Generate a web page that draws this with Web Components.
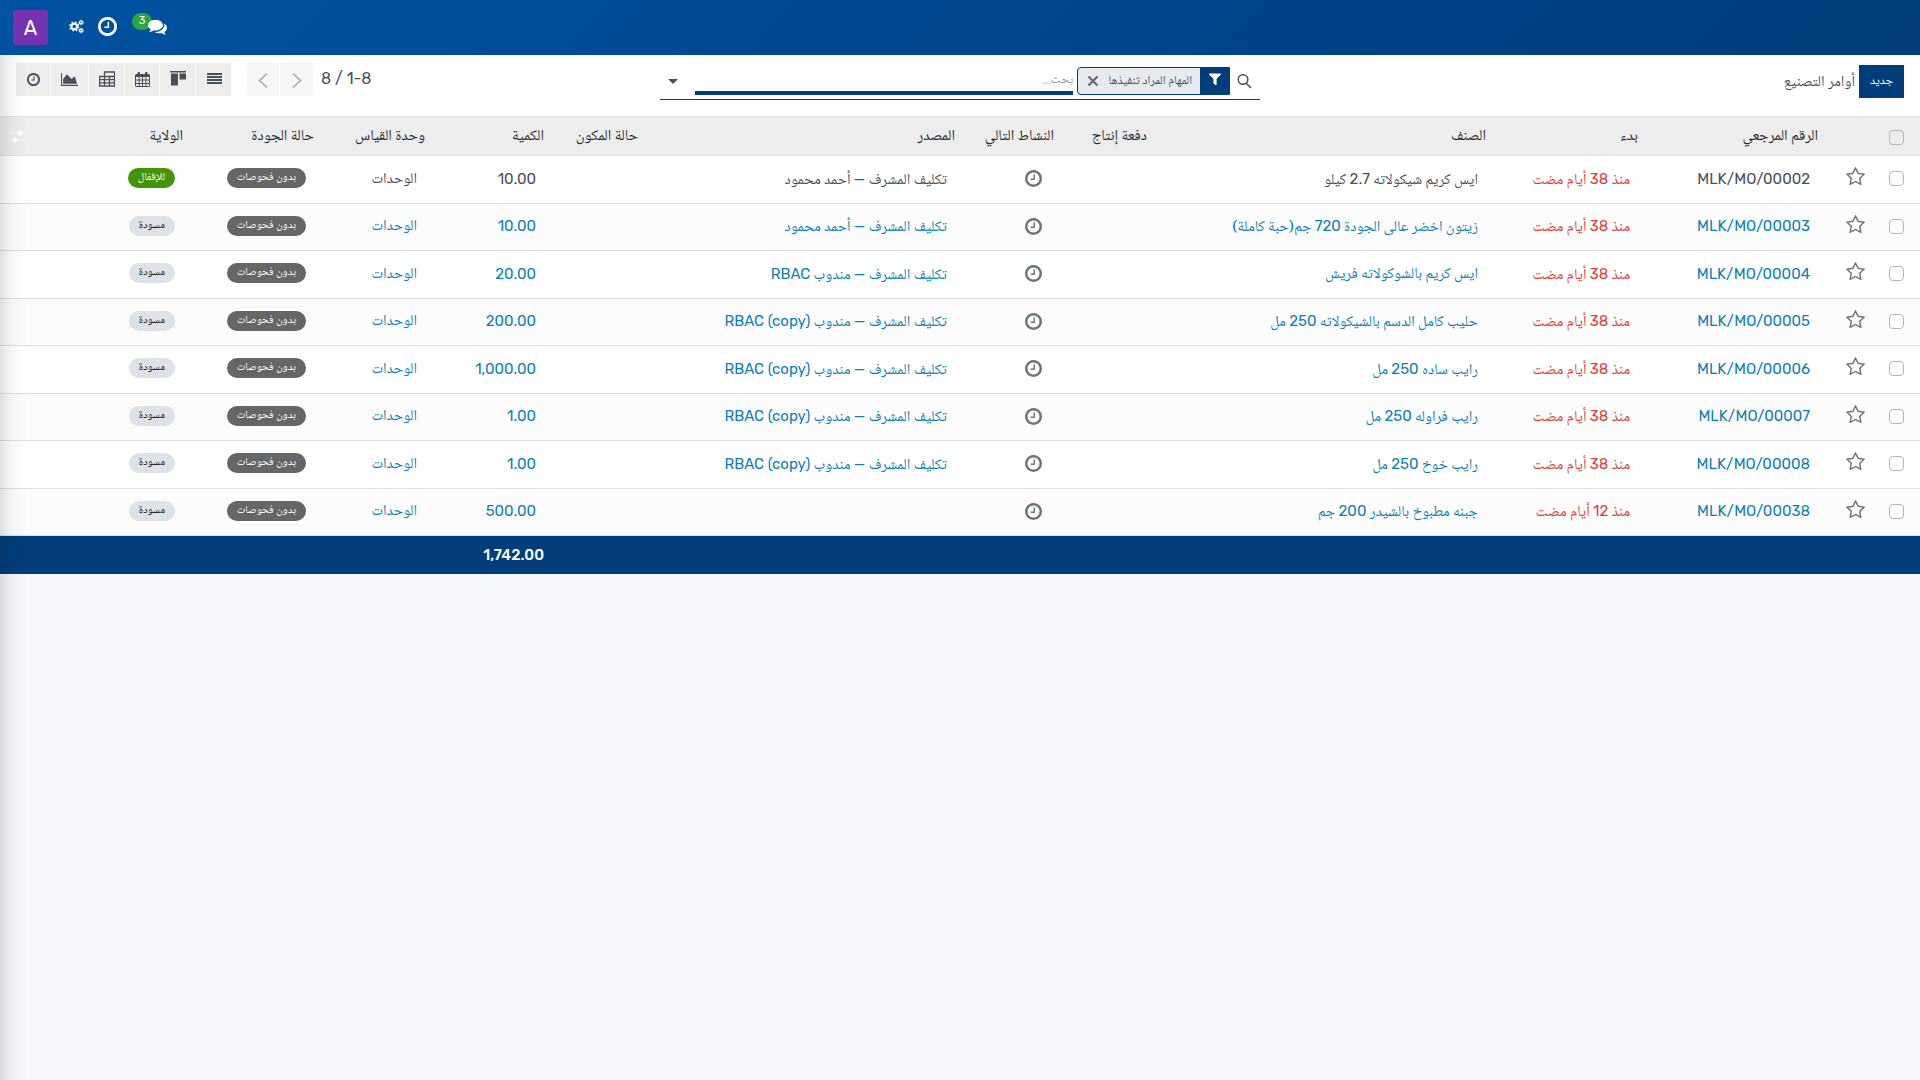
<!DOCTYPE html>
<html lang="ar" dir="rtl">

<head>
  <meta charset="UTF-8">
  <meta name="viewport" content="width=device-width, initial-scale=1.0">
  <title>أوامر التصنيع</title>
  <style>
    body {
      --primary: #003d7a;
      --border: #dee2e6;
      --text: #4a4f59;
      --info: #0c82ad;
      --danger: #d9403c;
      --latin: Rubik, Roboto, sans-serif;
      margin: 0;
      min-height: 100vh;
      display: flex;
      flex-direction: column;
      background: #f5f7fb;
      color: var(--text);
      font: 15px/22px "Noto Naskh Arabic", Rubik, Roboto, sans-serif;
    }
  </style>
</head>

<body>

  <main-navbar user="A" messages="3"></main-navbar>

  <action-view>
    <control-panel slot="panel" heading="أوامر التصنيع" pager="1-8 / 8">
      <search-facet>المهام المراد تنفيذها</search-facet>
    </control-panel>
    <order-list></order-list>
  </action-view>

  <template id="main-navbar">
    <style>
      :host {
        display: flex;
        justify-content: flex-end;
        align-items: center;
        height: 55px;
        padding: 0 13px;
        background: linear-gradient(135deg, #0052a2, #003d7a);
        color: #fff;
        font-family: var(--latin);
      }

      button {
        display: flex;
        padding: 0;
        border: 0;
        background: none;
        color: inherit;
        font: inherit;
        cursor: pointer;
      }

      .tools {
        display: flex;
        align-items: center;
        gap: 14px;
        margin-left: 21px;
        padding-bottom: 2px;
      }

      .messages {
        position: relative;
        margin-left: 17px;
      }

      .count {
        position: absolute;
        top: -4px;
        right: 15px;
        width: 20px;
        height: 17px;
        border-radius: 9px;
        background: #28a745;
        font-size: 11px;
        line-height: 15px;
        text-align: center;
      }

      .messages svg-icon {
        position: relative;
      }

      .avatar {
        width: 35px;
        height: 35px;
        justify-content: center;
        align-items: center;
        border-radius: 3px;
        background: #7432b0;
        font-size: 20px;
      }
    </style>
    <div class="tools">
      <button class="messages" aria-label="المحادثات">
        <span class="count"></span>
        <svg-icon name="comments" size="19"></svg-icon>
      </button>
      <button aria-label="الأنشطة"><svg-icon name="clock" size="19"></svg-icon></button>
      <button aria-label="الإعدادات"><svg-icon name="cogs" size="15"></svg-icon></button>
    </div>
    <button class="avatar"></button>
  </template>

  <template id="action-view">
    <style>
      :host {
        display: block;
        flex: 1;
        position: relative;
      }

      .edge {
        position: absolute;
        top: 0;
        bottom: 0;
        left: 0;
        width: 28px;
        background: linear-gradient(to right, rgba(0, 0, 0, .11), rgba(0, 0, 0, .03) 45%, transparent);
        pointer-events: none;
      }
    </style>
    <slot name="panel"></slot>
    <slot></slot>
    <div class="edge"></div>
  </template>

  <template id="control-panel">
    <style>
      :host {
        display: grid;
        grid-template-columns: 1fr 600px 1fr;
        height: 61px;
        padding: 0 16px;
        box-sizing: border-box;
        background: #fff;
      }

      button {
        display: flex;
        justify-content: center;
        align-items: center;
        padding: 0;
        border: 0;
        color: inherit;
        font: inherit;
        cursor: pointer;
      }

      .start {
        display: flex;
        align-items: flex-start;
        gap: 4px;
        padding-top: 10px;
      }

      .create {
        width: 45px;
        height: 33px;
        background: var(--primary);
        color: #fff;
        font-size: 12px;
      }

      h1 {
        margin: 0;
        font-size: 15px;
        font-weight: 400;
        line-height: 36px;
      }

      .search {
        display: flex;
        align-items: flex-start;
        align-self: start;
        height: 32px;
        margin-top: 12px;
        border-bottom: 1px solid var(--primary);
      }

      .lens {
        display: flex;
        width: 30px;
        height: 27px;
        padding-right: 2px;
        box-sizing: border-box;
        justify-content: center;
        align-items: center;
      }

      input {
        flex: 1;
        min-width: 0;
        height: 28px;
        margin-right: 4px;
        padding: 1px 0 0;
        box-sizing: border-box;
        border: 0;
        border-bottom: 4px solid var(--primary);
        outline: 0;
        background: none;
        color: inherit;
        font: inherit;
        font-size: 13px;
      }

      input::placeholder {
        color: #9a9da2;
      }

      .toggle {
        width: 35px;
        height: 27px;
        padding-left: 8px;
        justify-content: flex-end;
        background: none;
      }

      .end {
        display: flex;
        justify-content: flex-end;
        align-items: flex-start;
        padding-top: 8px;
      }

      .pager {
        display: flex;
        margin-left: 16px;
      }

      .pager span {
        margin-left: 8px;
        font: 16px/32px var(--latin);
      }

      .pager button {
        width: 33px;
        height: 33px;
        background: #f6f6f6;
        color: #a3a5aa;
      }

      .pager button:first-of-type {
        border-radius: 0 4px 4px 0;
        margin-left: 1px;
      }

      .pager button:last-of-type {
        border-radius: 4px 0 0 4px;
        width: 32px;
      }

      .views {
        display: flex;
        gap: 1px;
      }

      .views button {
        width: 35px;
        height: 33px;
        padding-bottom: 1px;
        background: #ededed;
      }

      .views button.wide {
        width: 37px;
      }

      .views button.narrow {
        width: 34px;
      }
    </style>
    <div class="start">
      <button class="create">جديد</button>
      <h1></h1>
    </div>
    <div class="search" role="search">
      <span class="lens"><svg-icon name="search" size="16"></svg-icon></span>
      <slot></slot>
      <input type="text" placeholder="بحث..." aria-label="بحث">
      <button class="toggle" aria-label="خيارات البحث"><svg-icon name="caret" size="10"></svg-icon></button>
    </div>
    <div class="end">
      <div class="pager">
        <span></span>
        <button aria-label="السابق"><svg-icon name="right" size="16"></svg-icon></button>
        <button aria-label="التالي"><svg-icon name="left" size="16"></svg-icon></button>
      </div>
      <div class="views">
        <button aria-label="قائمة"><svg-icon name="list" size="16"></svg-icon></button>
        <button aria-label="كانبان"><svg-icon name="kanban" size="16"></svg-icon></button>
        <button class="narrow" aria-label="تقويم"><svg-icon name="calendar" size="15"></svg-icon></button>
        <button aria-label="جدول محوري"><svg-icon name="pivot" size="16"></svg-icon></button>
        <button class="wide" aria-label="رسم بياني"><svg-icon name="chart" size="17"></svg-icon></button>
        <button class="narrow" aria-label="نشاط"><svg-icon name="clock" size="13"></svg-icon></button>
      </div>
    </div>
  </template>

  <template id="search-facet">
    <style>
      :host {
        display: flex;
        height: 28px;
        box-sizing: border-box;
        border: 1px solid var(--primary);
        border-radius: 4px 0 0 4px;
        overflow: hidden;
        background: #e7eaee;
        font-size: 12px;
        line-height: 28px;
      }

      .kind {
        display: flex;
        width: 29px;
        justify-content: center;
        align-items: center;
        padding-bottom: 5px;
        background: var(--primary);
        color: #fff;
      }

      .label {
        padding-right: 8px;
      }

      button {
        display: flex;
        width: 30px;
        justify-content: center;
        align-items: center;
        padding: 0;
        border: 0;
        background: none;
        color: #686b78;
        cursor: pointer;
      }
    </style>
    <span class="kind"><svg-icon name="filter" size="12"></svg-icon></span>
    <span class="label"><slot></slot></span>
    <button aria-label="إزالة"><svg-icon name="close" size="12"></svg-icon></button>
  </template>

  <template id="state-badge">
    <style>
      :host {
        display: inline-block;
        padding: 0 10px;
        border-radius: 10px;
        background: #dee2e6;
        color: #15181c;
        font-size: 11px;
        line-height: 20px;
      }

      :host([kind="muted"]) {
        background: #666;
        color: #fff;
      }

      :host([kind="success"]) {
        background: #44940a;
        color: #fff;
      }
    </style>
    <slot></slot>
  </template>

  <template id="order-list">
    <style>
      :host {
        display: block;
      }

      table {
        width: 100%;
        table-layout: fixed;
        border-collapse: collapse;
        background: #fff;
      }

      th,
      td {
        padding: 0 14px 0 0;
        text-align: right;
        white-space: nowrap;
        font-weight: 400;
      }

      thead th {
        height: 36px;
        padding: 2px 6px 0 0;
        border: solid var(--border);
        border-width: 1px 0;
        background: #ededed;
        color: #24282d;
      }

      tbody tr {
        height: 48px;
      }

      tbody tr:nth-child(even) {
        height: 47px;
        background: #fcfcfc;
      }

      tbody td {
        border-bottom: 1px solid var(--border);
      }

      tbody tr.draft {
        color: var(--info);
      }

      tbody .late {
        color: var(--danger);
      }

      .latin {
        font-family: var(--latin);
      }

      td.latin,
      td.pick,
      td.star,
      td.activity {
        padding-bottom: 2px;
      }

      thead .pick,
      tbody .pick {
        padding-right: 16px;
      }

      thead .options {
        padding: 0 12px 0 0;
        color: #fff;
      }

      .star {
        padding-right: 13px;
      }

      .activity {
        padding-right: 18px;
      }

      .activity,
      .star {
        color: #6c757d;
      }

      .badge {
        padding-bottom: 4px;
        line-height: 20px;
      }

      tfoot td {
        height: 38px;
        padding-right: 6px;
        background: var(--primary);
        color: #fff;
        font-family: var(--latin);
        font-weight: 500;
      }

      input {
        appearance: none;
        display: block;
        width: 15px;
        height: 15px;
        margin: 0;
        border: 1px solid #b3b5b8;
        border-radius: 4px;
        box-sizing: border-box;
        background: #fff;
      }

      thead input {
        background: none;
      }

      button {
        display: flex;
        padding: 0;
        border: 0;
        background: none;
        color: inherit;
        cursor: pointer;
      }

      .star button {
        padding-bottom: 4px;
      }
    </style>
    <table>
      <colgroup>
        <col style="width: 42px">
        <col style="width: 54px">
        <col style="width: 180px">
        <col style="width: 152px">
        <col>
        <col style="width: 93px">
        <col style="width: 99px">
        <col style="width: 317px">
        <col style="width: 94px">
        <col style="width: 119px">
        <col style="width: 111px">
        <col style="width: 131px">
        <col style="width: 152px">
        <col style="width: 37px">
      </colgroup>
      <thead>
        <tr>
          <th class="pick"><input type="checkbox" aria-label="تحديد الكل"></th>
          <th></th>
          <th>الرقم المرجعي</th>
          <th>بدء</th>
          <th>الصنف</th>
          <th>دفعة إنتاج</th>
          <th>النشاط التالي</th>
          <th>المصدر</th>
          <th>حالة المكون</th>
          <th>الكمية</th>
          <th>وحدة القياس</th>
          <th>حالة الجودة</th>
          <th>الولاية</th>
          <th class="options"><button aria-label="الأعمدة"><svg-icon name="sliders" size="15"></svg-icon></button></th>
        </tr>
      </thead>
      <tbody></tbody>
      <tfoot>
        <tr>
          <td colspan="9"></td>
          <td class="total"></td>
          <td colspan="4"></td>
        </tr>
      </tfoot>
    </table>
  </template>

  <script>
    // name: [viewBox, markup]
    const ICONS = {
      clock: ["128 128 1536 1536", '<path d="M1024 544v448q0 14-9 23t-23 9h-320q-14 0-23-9t-9-23v-64q0-14 9-23t23-9h224v-352q0-14 9-23t23-9h64q14 0 23 9t9 23zm416 352q0-148-73-273t-198-198-273-73-273 73-198 198-73 273 73 273 198 198 273 73 273-73 198-198 73-273zm224 0q0 209-103 385.500t-279.500 279.500-385.500 103-385.500-103-279.500-279.500-103-385.500 103-385.500 279.500-279.500 385.500-103 385.500 103 279.500 279.500 103 385.500z"/>'],
      comments: ["0 128 1792 1536", '<path d="M1408 768q0 139-94 257t-256.500 186.500-353.500 68.500q-86 0-176-16-124 88-278 128-36 9-86 16h-3q-11 0-20.500-8t-11.500-21q-1-3-1-6.500t.5-6.500 2-6l2.500-5 3.500-5.500 4-5 4.500-5 4-4.500q5-6 23-25t26-29.500 22.500-29 25-38.500 20.500-44q-124-72-195-177t-71-224q0-139 94-257t256.500-186.500 353.500-68.500 353.500 68.500 256.500 186.500 94 257zm384 256q0 120-71 224.500t-195 176.500q10 24 20.500 44t25 38.500 22.500 29 26 29.500 23 25q1 1 4 4.500t4.500 5 4 5 3.500 5.500l2.500 5 2 6 .5 6.500-1 6.500q-3 14-13 22t-22 7q-50-7-86-16-154-40-278-128-90 16-176 16-271 0-472-132 58 4 88 4 161 0 309-45t264-129q125-92 192-212t67-254q0-77-23-152 129 71 204 178t75 230z"/>'],
      cogs: ["0 0 30 30", '<g fill="none" stroke="currentColor"><circle cx="10.500" cy="15" r="5.500" stroke-width="4"/><circle cx="10.500" cy="15" r="8.700" stroke-width="3" stroke-dasharray="3.600 3.233"/><circle cx="24" cy="7" r="2.800" stroke-width="2.400"/><circle cx="24" cy="7" r="4.700" stroke-width="1.800" stroke-dasharray="2 1.691"/><circle cx="24" cy="23" r="2.800" stroke-width="2.400"/><circle cx="24" cy="23" r="4.700" stroke-width="1.800" stroke-dasharray="2 1.691"/></g>'],
      search: ["0 0 16 16", '<g fill="none" stroke="currentColor" stroke-width="1.500"><circle cx="7" cy="6.500" r="4.800"/><path d="M10.300 10.200L15 15"/></g>'],
      caret: ["0 0 10 10", '<path d="M0 3h10L5 8z"/>'],
      filter: ["192 192 1408 1408", '<path d="M1595 295q17 41-14 70l-493 493v742q0 42-39 59-13 5-25 5-27 0-45-19l-256-256q-19-19-19-45v-486l-493-493q-31-29-14-70 17-39 59-39h1280q42 0 59 39z"/>'],
      close: ["0 0 12 12", '<path d="M1.500 1.500l9 9M10.500 1.500l-9 9" fill="none" stroke="currentColor" stroke-width="2.200"/>'],
      left: ["0 0 16 16", '<path d="M12 1.500L4.500 8.500 12 15.500" fill="none" stroke="currentColor" stroke-width="1.400"/>'],
      right: ["0 0 16 16", '<path d="M4 1.500L11.500 8.500 4 15.500" fill="none" stroke="currentColor" stroke-width="1.400"/>'],
      list: ["0 0 16 16", '<path d="M1 2h15v2H1zM1 5h15v2H1zM1 8h15v2H1zM1 11h15v2H1z"/>'],
      kanban: ["0 0 16 16", '<path d="M0 0h16v1.500H0zM1 2.500h7v12H1zM9.500 2.500H16v6H9.500z"/>'],
      calendar: ["0 0 15 15", '<path d="M1.500 2h12A1.500 1.500 0 0115 3.500v10a1.500 1.500 0 01-1.500 1.500h-12A1.500 1.500 0 010 13.500v-10A1.500 1.500 0 011.500 2zM1 5v2.500h2.600V5zm3.600 0v2.500h2.400V5zM8 5v2.500h2.400V5zm3.400 0v2.500H14V5zM1 8.500V11h2.600V8.500zm3.600 0V11H7V8.500zM8 8.500V11h2.400V8.500zm3.400 0V11H14V8.500zM1 12v2h2.600v-2zm3.600 0v2H7v-2zM8 12v2h2.400v-2zm3.400 0v2H14v-2z" fill-rule="evenodd"/><rect x="2.500" y="0" width="2.500" height="4" rx="1"/><rect x="10" y="0" width="2.500" height="4" rx="1"/>'],
      pivot: ["0 0 16 16", '<path d="M5.500 5V1h10v14H.5V5.500h15M.5 8.600h15M.5 11.800h15M5.500 5v10M10.500 5v10" fill="none" stroke="currentColor" stroke-width="1.300"/>'],
      chart: ["0 0 2048 1792", '<path d="M2048 1536v128h-2048v-1536h128v1408h1920zm-384-1024l256 896h-1664v-576l448-576 576 576z"/>'],
      star: ["64 64 1664 1600", '<path d="M1201 1004l306-297-422-62-189-382-189 382-422 62 306 297-73 421 378-199 377 199zm527-357q0 22-26 48l-363 354 86 500q1 7 1 20 0 50-41 50-19 0-40-12l-449-236-449 236q-22 12-40 12-21 0-31.500-14.500t-10.500-35.500q0-6 2-20l86-500-364-354q-25-27-25-48 0-37 56-46l502-73 225-455q19-41 49-41t49 41l225 455 502 73q56 9 56 46z"/>'],
      sliders: ["0 0 15 15", '<path d="M0 3.500h15v1H0zM0 10.500h15v1H0z"/><circle cx="10" cy="4" r="2.500"/><circle cx="5" cy="11" r="2.500"/>']
    };

    const SUPERVISOR = "تكليف المشرف — ";

    const ORDERS = [
      { ref: "MLK/MO/00002", days: 38, product: "ايس كريم شيكولاته 2.7 كيلو", source: SUPERVISOR + "أحمد محمود", qty: 10, closing: true },
      { ref: "MLK/MO/00003", days: 38, product: "زيتون اخضر عالى الجودة 720 جم(حبة كاملة)", source: SUPERVISOR + "أحمد محمود", qty: 10 },
      { ref: "MLK/MO/00004", days: 38, product: "ايس كريم بالشوكولاته فريش", source: SUPERVISOR + "مندوب RBAC", qty: 20 },
      { ref: "MLK/MO/00005", days: 38, product: "حليب كامل الدسم بالشيكولاته 250 مل", source: SUPERVISOR + "مندوب RBAC (copy)", qty: 200 },
      { ref: "MLK/MO/00006", days: 38, product: "رايب ساده 250 مل", source: SUPERVISOR + "مندوب RBAC (copy)", qty: 1000 },
      { ref: "MLK/MO/00007", days: 38, product: "رايب فراوله 250 مل", source: SUPERVISOR + "مندوب RBAC (copy)", qty: 1 },
      { ref: "MLK/MO/00008", days: 38, product: "رايب خوخ 250 مل", source: SUPERVISOR + "مندوب RBAC (copy)", qty: 1 },
      { ref: "MLK/MO/00038", days: 12, product: "جبنه مطبوخ بالشيدر 200 جم", source: "", qty: 500 }
    ];

    const formatQty = (value) => value.toLocaleString("en-US", { minimumFractionDigits: 2 });

    // Sets digits, dashes and latin words of an arabic text in the latin font
    const mixed = (text) => text.replace(/[A-Z]+ \(\w+\)|[A-Z]+|[\d.]+|—/g, '<span class="latin">$&</span>');

    class TemplateElement extends HTMLElement {
      constructor() {
        super();
        const template = document.querySelector(`template#${this.localName}`);
        this.attachShadow({ mode: "open" }).appendChild(template.content.cloneNode(true));
      }

      $(selector) {
        return this.shadowRoot.querySelector(selector);
      }
    }

    class SvgIcon extends HTMLElement {
      connectedCallback() {
        if (this.shadowRoot) return;
        const [viewBox, markup] = ICONS[this.getAttribute("name")];
        const size = this.getAttribute("size");
        this.attachShadow({ mode: "open" }).innerHTML = `
          <style>
            :host { display: inline-flex; }
            svg { display: block; fill: currentColor; }
          </style>
          <svg width="${size}" height="${size}" viewBox="${viewBox}" aria-hidden="true">${markup}</svg>`;
      }
    }

    class MainNavbar extends TemplateElement {
      connectedCallback() {
        this.$(".avatar").textContent = this.getAttribute("user");
        this.$(".count").textContent = this.getAttribute("messages");
      }
    }

    class ActionView extends TemplateElement { }

    class ControlPanel extends TemplateElement {
      connectedCallback() {
        this.$("h1").textContent = this.getAttribute("heading");
        this.$(".pager span").textContent = this.getAttribute("pager");
      }
    }

    class SearchFacet extends TemplateElement {
      connectedCallback() {
        this.$("button").addEventListener("click", () => this.remove());
      }
    }

    class StateBadge extends TemplateElement { }

    class OrderList extends TemplateElement {
      connectedCallback() {
        this.$("tbody").innerHTML = ORDERS.map((order) => this.#row(order)).join("");
        this.$(".total").textContent = formatQty(ORDERS.reduce((sum, order) => sum + order.qty, 0));
        this.$("thead input").addEventListener("change", (event) => {
          this.shadowRoot.querySelectorAll("tbody input").forEach((box) => box.checked = event.target.checked);
        });
      }

      #row({ ref, days, product, source, qty, closing }) {
        const state = closing
          ? '<state-badge kind="success">للإقفال</state-badge>'
          : "<state-badge>مسودة</state-badge>";
        return `
          <tr class="${closing ? "" : "draft"}">
            <td class="pick"><input type="checkbox" aria-label="${ref}"></td>
            <td class="star"><button aria-label="مفضلة"><svg-icon name="star" size="19"></svg-icon></button></td>
            <td class="latin">${ref}</td>
            <td class="late">${mixed(`منذ ${days} أيام مضت`)}</td>
            <td>${mixed(product)}</td>
            <td></td>
            <td class="activity"><button aria-label="جدولة نشاط"><svg-icon name="clock" size="17"></svg-icon></button></td>
            <td>${mixed(source)}</td>
            <td></td>
            <td class="latin">${formatQty(qty)}</td>
            <td>الوحدات</td>
            <td class="badge"><state-badge kind="muted">بدون فحوصات</state-badge></td>
            <td class="badge">${state}</td>
            <td></td>
          </tr>`;
      }
    }

    customElements.define("svg-icon", SvgIcon);
    customElements.define("main-navbar", MainNavbar);
    customElements.define("action-view", ActionView);
    customElements.define("control-panel", ControlPanel);
    customElements.define("search-facet", SearchFacet);
    customElements.define("state-badge", StateBadge);
    customElements.define("order-list", OrderList);
  </script>
</body>

</html>
